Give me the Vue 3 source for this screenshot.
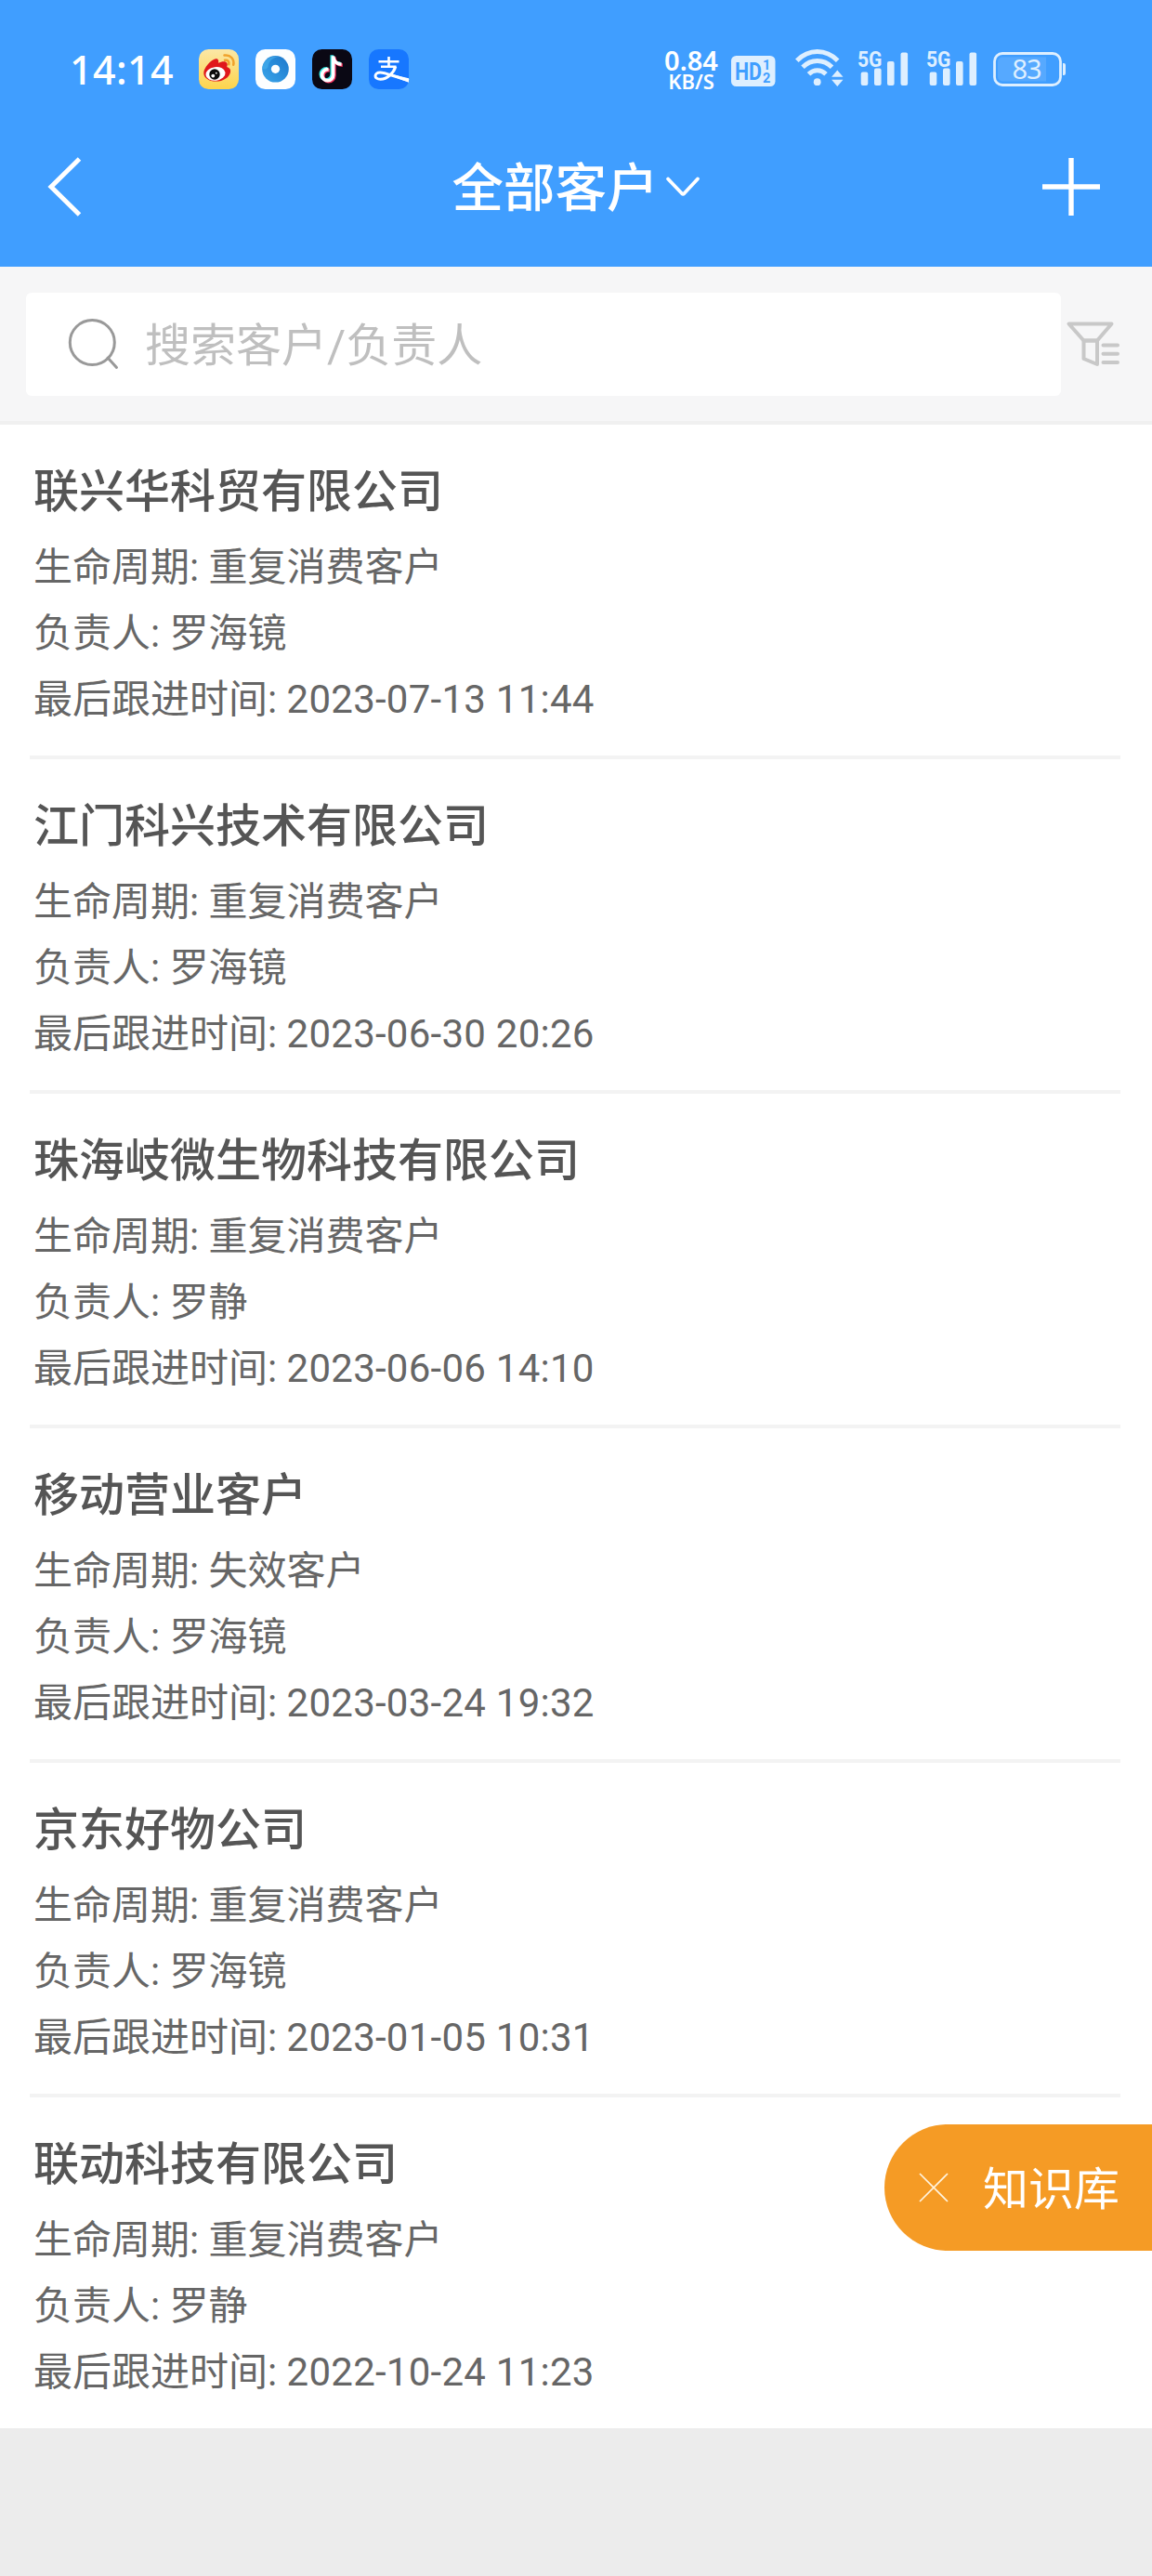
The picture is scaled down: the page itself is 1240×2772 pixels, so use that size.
<script setup>
const title = '全部客户'

const customers = [
  { name: '联兴华科贸有限公司', stage: '重复消费客户', owner: '罗海镜', followed: '2023-07-13 11:44' },
  { name: '江门科兴技术有限公司', stage: '重复消费客户', owner: '罗海镜', followed: '2023-06-30 20:26' },
  { name: '珠海岐微生物科技有限公司', stage: '重复消费客户', owner: '罗静', followed: '2023-06-06 14:10' },
  { name: '移动营业客户', stage: '失效客户', owner: '罗海镜', followed: '2023-03-24 19:32' },
  { name: '京东好物公司', stage: '重复消费客户', owner: '罗海镜', followed: '2023-01-05 10:31' },
  { name: '联动科技有限公司', stage: '重复消费客户', owner: '罗静', followed: '2022-10-24 11:23' },
]
</script>

<template>
  <div class="page">
    <header class="header">
      <div class="status">
        <span class="clock">14:14</span>
        <div class="apps">
          <!-- weibo -->
          <svg class="app" viewBox="0 0 43 43">
            <defs>
              <linearGradient id="wb" x1="0" y1="0" x2="0" y2="1">
                <stop offset="0" stop-color="#fbe7a6" />
                <stop offset="1" stop-color="#fdd44c" />
              </linearGradient>
            </defs>
            <rect width="43" height="43" rx="10.5" fill="url(#wb)" />
            <path d="M5.300 25.500C5.300 20 13 11 18.200 10.200c3-.4 3.400 2.300 2.700 4.600 3.500-1.600 8.300-2.400 9.500.2.700 1.500.2 2.800-.2 4.100 3.300 1 4.300 3 3.800 5.600C32.800 30.500 26 34.600 18.500 34.600 11 34.600 5.300 31 5.300 25.500z" fill="#e0171c" />
            <ellipse cx="18" cy="26.400" rx="10.600" ry="7.300" fill="#fff" transform="rotate(-7 18 26.400)" />
            <circle cx="17" cy="27" r="5.700" fill="#0d0d0d" />
            <circle cx="15.300" cy="28.600" r="1.900" fill="#fff" />
            <circle cx="18.800" cy="25.700" r=".9" fill="#fff" />
            <path d="M27.500 6.600c6.500-1 11 4 9.700 10.200M28 11.800c3.300-.6 5 1.600 4.300 4.500" fill="none" stroke="#f0a22c" stroke-width="2.500" stroke-linecap="round" />
          </svg>
          <!-- ring browser -->
          <svg class="app" viewBox="0 0 43 43">
            <defs>
              <linearGradient id="ring" x1="0" y1="1" x2="1" y2="0">
                <stop offset="0" stop-color="#3aa5ea" />
                <stop offset=".5" stop-color="#2b8edb" />
                <stop offset="1" stop-color="#1f78cb" />
              </linearGradient>
            </defs>
            <rect width="43" height="43" rx="10.500" fill="#fdfeff" />
            <circle cx="21.500" cy="21.300" r="14.300" fill="url(#ring)" />
            <path d="M7.300 20C9 11 18 5.500 26 8c-7 0-12 5-12.500 11-1.500 3-5 3.500-6.200 1z" fill="#4ab2ee" opacity=".6" />
            <circle cx="21.500" cy="21.300" r="4.600" fill="#fff" />
          </svg>
          <!-- short video -->
          <svg class="app" viewBox="0 0 43 43">
            <rect width="43" height="43" rx="10.500" fill="#0a0814" />
            <g fill="none" stroke-width="3.700">
              <path d="M22.300 7v20.500a6 6 0 1 1-6-6h1M22.300 8c.8 5 4 7.700 9 8" stroke="#35e6e3" transform="translate(-1 -.7)" />
              <path d="M22.300 7v20.500a6 6 0 1 1-6-6h1M22.300 8c.8 5 4 7.700 9 8" stroke="#f5315d" transform="translate(1.500 1.200)" />
              <path d="M22.300 7v20.500a6 6 0 1 1-6-6h1M22.300 8c.8 5 4 7.700 9 8" stroke="#fff" transform="translate(.3 .2)" />
            </g>
          </svg>
          <!-- payment -->
          <svg class="app" viewBox="0 0 43 43">
            <rect width="43" height="43" rx="10.500" fill="#1777ff" />
            <g fill="none" stroke="#fff">
              <path d="M10.500 13.200h22M21.500 8v10.500M13 18.800h16.500" stroke-width="2.600" />
              <path d="M28.800 18.500C27 25 20 32.300 12.500 32.300c-7.500 0-7-7.300-.3-7.300C18 25 27 29.500 43 33.500" stroke-width="3" />
            </g>
            <path d="M26 27.300l17 4v4.500L25 29z" fill="#fff" />
          </svg>
        </div>

        <div class="signals">
          <div class="speed">
            <span class="speed-value">0.84</span>
            <span class="speed-unit">KB/S</span>
          </div>
          <svg class="hd" viewBox="0 0 48 33">
            <rect width="47.500" height="33" rx="5.500" fill="#deefff" />
            <g class="hd-text" fill="#409eff">
              <text x="4" y="25.500" font-size="25" textLength="29" lengthAdjust="spacingAndGlyphs">HD</text>
              <text x="34" y="15.200" font-size="14.500">1</text>
              <text x="34" y="28.500" font-size="14.500">2</text>
            </g>
          </svg>
          <svg class="wifi" viewBox="0 0 52 40">
            <g fill="none" stroke="#deefff" stroke-width="5">
              <path d="M1.800 12.200C14.500-.8 33-.8 45.700 12.200" />
              <path d="M8 19.300c9-9 22.500-9 31.500 0" />
              <path d="M14.500 26.700c5.400-5.300 13.100-5.300 18.500 0" />
            </g>
            <circle cx="23.700" cy="35.200" r="3.900" fill="#deefff" />
            <path d="M45.300 22.500l6.200 7.300H39.100zM45.300 40l-6.200-7.300h12.400z" fill="#deefff" />
          </svg>
          <svg v-for="n in 2" :key="n" class="cell" viewBox="0 0 56 40">
            <g fill="#deefff">
              <text class="cell-text" x="0" y="18.500" font-size="24" textLength="26.500" lengthAdjust="spacingAndGlyphs">5G</text>
              <rect x="3.700" y="24.500" width="7.600" height="14.500" rx="2" />
              <rect x="18" y="20.500" width="7.600" height="18.500" rx="2" />
              <rect x="32" y="13" width="7.600" height="26" rx="2" />
              <rect x="46.500" y="3.500" width="7.600" height="35.500" rx="2" />
            </g>
          </svg>
          <svg class="battery" viewBox="0 0 79 37">
            <rect x="1.500" y="1.500" width="71" height="34" rx="8.500" fill="none" stroke="#deefff" stroke-width="2.800" />
            <path d="M10 5.500h47v26H10a5 5 0 0 1-5-5v-16a5 5 0 0 1 5-5z" fill="#56a9ff" />
            <path d="M75 12h1a2 2 0 0 1 2 2v9a2 2 0 0 1-2 2h-1z" fill="#deefff" />
            <text class="battery-text" x="20.500" y="28.500" font-size="29" fill="#deefff" textLength="32">83</text>
          </svg>
        </div>
      </div>

      <nav class="nav">
        <svg class="back" viewBox="0 0 40 66">
          <path d="M34.500 3L4 33l30.500 30" fill="none" stroke="#fff" stroke-width="5" />
        </svg>
        <div class="nav-title">
          <span>{{ title }}</span>
          <svg class="caret" viewBox="0 0 38 24">
            <path d="M3 3.500l15 15.700q1.200 1 2.400 0L35 3.500" fill="none" stroke="#fff" stroke-width="3.800" stroke-linecap="round" />
          </svg>
        </div>
        <svg class="plus" viewBox="0 0 62 62">
          <path d="M31 0v62M0 31h62" stroke="#fff" stroke-width="5.400" />
        </svg>
      </nav>
    </header>

    <div class="toolbar">
      <div class="search">
        <svg class="lens" viewBox="0 0 56 56">
          <g fill="none" stroke="#999" stroke-width="3">
            <circle cx="26.300" cy="26.500" r="24" />
            <path d="M43 43l9.500 10.500" stroke-linecap="round" />
          </g>
        </svg>
        <span class="placeholder">搜索客户/负责人</span>
      </div>
      <svg class="filter" viewBox="0 0 58 50">
        <g fill="none" stroke="#c8c8c8" stroke-width="4" stroke-linejoin="round">
          <path d="M2.500 3.500h46L33 21.500H18.500z" />
          <path d="M18.500 21.500H33V47l-14.500-6z" />
          <path d="M39.500 26.500H55M39.500 35.700H55M39.500 45H55" stroke-linecap="round" />
        </g>
      </svg>
    </div>

    <main class="list">
      <article v-for="c in customers" :key="c.name" class="item">
        <h2 class="name">{{ c.name }}</h2>
        <p class="row">生命周期: {{ c.stage }}</p>
        <p class="row">负责人: {{ c.owner }}</p>
        <p class="row">最后跟进时间: <span class="date">{{ c.followed }}</span></p>
      </article>
    </main>

    <div class="fab">
      <svg class="close" viewBox="0 0 32 32">
        <path d="M1 1l30 30M31 1L1 31" stroke="#fff4e0" stroke-width="1.700" />
      </svg>
      <span>知识库</span>
    </div>
  </div>
</template>

<style>
body {
  background: #ececec;
}
</style>

<style scoped>
.page {
  position: relative;
  width: 1240px;
  height: 2772px;
  overflow: hidden;
  background: #ececec;
  font-family: Roboto, 'Noto Sans CJK SC', sans-serif;
}
.page svg {
  display: block;
  flex: none;
  overflow: visible;
}
.header {
  display: flex;
  flex-direction: column;
  height: 287px;
  background: #409eff;
  color: #fff;
}
.status {
  display: flex;
  align-items: center;
  height: 114px;
  padding: 35px 93px 0 75px;
  box-sizing: border-box;
}
.clock {
  width: 139px;
  font: 500 43px/60px 'Noto Sans', sans-serif;
  letter-spacing: 0.4px;
}
.apps {
  display: flex;
  gap: 18px;
}
.app {
  width: 43px;
  height: 43px;
}
.signals {
  display: flex;
  align-items: center;
  margin-left: auto;
}
.speed {
  display: flex;
  flex-direction: column;
  align-items: center;
  width: 62px;
  margin-right: 12px;
  font-family: 'Noto Sans', sans-serif;
  font-weight: 600;
  white-space: nowrap;
}
.speed-value {
  font-size: 29px;
  line-height: 24px;
}
.speed-unit {
  font-size: 22px;
  line-height: 20px;
}
.hd {
  width: 48px;
  height: 33px;
  margin: 4px 21px 0 0;
}
.hd-text {
  font-family: Roboto, sans-serif;
  font-weight: 700;
}
.wifi {
  width: 52px;
  height: 40px;
  margin: 0 15px 3px 0;
}
.cell {
  width: 56px;
  height: 40px;
  margin: 0 18px 3px 0;
}
.cell-text {
  font-family: Roboto, sans-serif;
  font-weight: 700;
}
.battery {
  width: 79px;
  height: 37px;
  margin: 0 -1px 0 -2px;
}
.battery-text {
  font-family: 'Noto Sans', sans-serif;
}
.nav {
  display: flex;
  align-items: center;
  justify-content: space-between;
  height: 173px;
  padding: 0 56px 0 51px;
}
.back {
  width: 40px;
  height: 66px;
}
.nav-title {
  display: flex;
  align-items: center;
  padding: 6px 0 0 27px;
  font-size: 55.5px;
  font-weight: 500;
  line-height: 80px;
}
.caret {
  width: 38px;
  height: 24px;
  margin: 0 0 6px 7px;
}
.plus {
  width: 62px;
  height: 62px;
}
.toolbar {
  display: flex;
  align-items: center;
  height: 170px;
  padding: 0 34px 0 28px;
  box-sizing: border-box;
  border-bottom: 4px solid #f0f0f0;
  background: #f6f6f7;
}
.search {
  display: flex;
  align-items: center;
  width: 1114px;
  height: 111px;
  box-sizing: border-box;
  padding-left: 45px;
  border-radius: 6px;
  background: #fff;
}
.lens {
  width: 56px;
  height: 56px;
}
.placeholder {
  margin-left: 27px;
  padding-top: 6px;
  color: #bfbfbf;
  font-size: 49px;
  line-height: 70px;
}
.filter {
  width: 58px;
  height: 50px;
  margin-left: 6px;
}
.list {
  padding: 0 34px 0 32px;
  background: #fff;
}
.item {
  height: 360px;
  box-sizing: border-box;
  padding: 38px 0 0 4px;
  border-bottom: 4px solid #f3f3f3;
}
.item:last-child {
  height: 356px;
  border-bottom: 0;
}
.name {
  height: 80px;
  margin: 0;
  color: #555;
  font-size: 49px;
  font-weight: 500;
  line-height: 70px;
}
.row {
  height: 71px;
  margin: 0;
  color: #666;
  font-size: 42px;
  line-height: 71px;
}
.date {
  letter-spacing: 0.25px;
}
.fab {
  position: absolute;
  top: 2286px;
  right: 0;
  display: flex;
  align-items: center;
  width: 288px;
  height: 136px;
  box-sizing: border-box;
  padding-left: 37px;
  border-radius: 68px 0 0 68px;
  background: #f59b25;
  color: #fff;
  font-size: 49px;
  line-height: 70px;
}
.fab span {
  margin-left: 37px;
  padding-top: 6px;
}
.close {
  width: 32px;
  height: 32px;
}
</style>
